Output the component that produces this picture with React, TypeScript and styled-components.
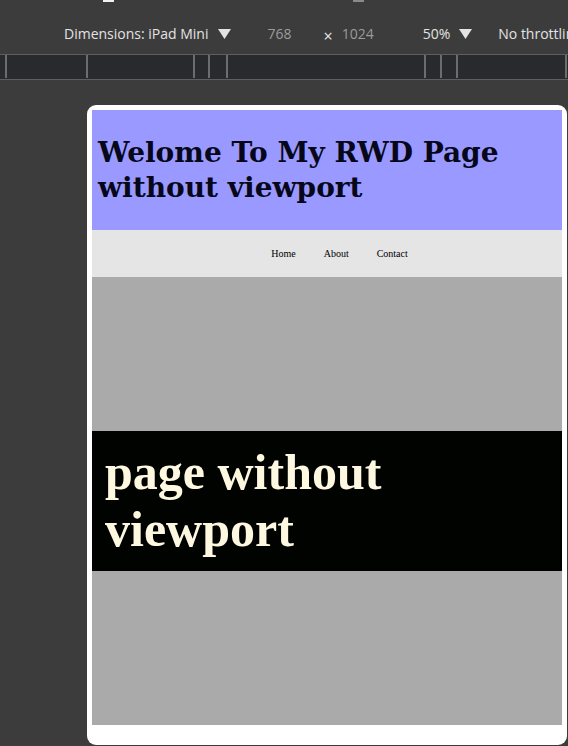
import React from "react";
import styled, { createGlobalStyle } from "styled-components";

const Global = createGlobalStyle`
  html, body {
    margin: 0;
    padding: 0;
    background: #3c3c3c;
    width: 568px;
    height: 746px;
    overflow: hidden;
  }
  * { box-sizing: border-box; }
`;

const Shell = styled.div`
  width: 568px;
  height: 746px;
  display: flex;
  flex-direction: column;
  background: #3c3c3c;
  overflow: hidden;
`;

const Toolbar = styled.div`
  height: 54px;
  display: flex;
  flex-direction: column;
`;

const Marks = styled.div`
  height: 3px;
  display: flex;
`;

const Mark = styled.div<{ $left: number; $width: number; $color: string }>`
  margin-left: ${(p) => p.$left}px;
  width: ${(p) => p.$width}px;
  height: 2px;
  background: ${(p) => p.$color};
`;

const Controls = styled.div`
  flex: 1;
  display: flex;
  align-items: center;
  padding-left: 64px;
  padding-top: 10px;
  font-family: "Open Sans", "Noto Sans", sans-serif;
  font-size: 14px;
  color: #e3e3e3;
  white-space: nowrap;
  overflow: hidden;
`;

const Label = styled.span<{ $muted?: boolean; $gap?: number }>`
  color: ${(p) => (p.$muted ? "#9b9b9b" : "#e3e3e3")};
  margin-left: ${(p) => p.$gap ?? 0}px;
`;

const Caret = styled.svg<{ $gap: number }>`
  margin-left: ${(p) => p.$gap}px;
  width: 13px;
  height: 10px;
  flex: none;
`;

const Times = styled.span<{ $gap: number }>`
  margin-left: ${(p) => p.$gap}px;
  font-size: 16px;
  color: #e8e8e8;
  position: relative;
  top: 2px;
`;

const Ruler = styled.div`
  height: 26px;
  background: #292a2d;
  border-top: 1px solid #5e5e5e;
  border-bottom: 1px solid #5e5e5e;
  display: flex;
  align-items: stretch;
`;

const RulerCell = styled.div<{ $width: number }>`
  width: ${(p) => p.$width}px;
  flex: none;
  border-right: 2px solid #6c6c6c;
  margin-bottom: 1px;
`;

const Stage = styled.div`
  flex: 1;
  padding: 25px 0 0 87px;
`;

const Device = styled.div`
  width: 480px;
  height: 640px;
  background: #ffffff;
  border-radius: 9px;
  padding: 5px 5px 20px 5px;
  display: flex;
  flex-direction: column;
`;

const Header = styled.header`
  height: 120px;
  background: #9999ff;
  display: flex;
  align-items: center;
  padding-left: 6px;
`;

const Title = styled.h1`
  margin: 0;
  font-family: "DejaVu Serif", Georgia, serif;
  font-weight: bold;
  font-size: 28px;
  line-height: 35px;
  color: #07071a;
`;

const Nav = styled.nav`
  height: 47px;
  background: #e5e5e5;
  display: flex;
  align-items: center;
  justify-content: center;
  padding-left: 25px;
  gap: 28px;
`;

const NavLink = styled.a`
  font-family: "Liberation Serif", "Times New Roman", serif;
  font-size: 10px;
  color: #000;
  text-decoration: none;
`;

const Main = styled.main`
  flex: 1;
  background: #aaaaaa;
  display: flex;
  flex-direction: column;
  justify-content: center;
`;

const Band = styled.section`
  height: 140px;
  background: #000300;
  padding: 13px 0 0 13px;
`;

const BandText = styled.h2`
  margin: 0;
  font-family: "Liberation Serif", "Times New Roman", serif;
  font-weight: bold;
  font-size: 50px;
  line-height: 57px;
  color: #fff8e0;
  width: 300px;
`;

const rulerCells = [7, 81, 107, 15, 18, 198, 16, 16, 109];

export default function App() {
  return (
    <>
      <Global />
      <Shell>
        <Toolbar>
          <Marks>
            <Mark $left={103} $width={11} $color="#f2f2f2" />
            <Mark $left={239} $width={11} $color="#8a8a8a" />
          </Marks>
          <Controls>
            <Label>Dimensions: iPad Mini</Label>
            <Caret $gap={10} viewBox="0 0 13 10">
              <path d="M0 0 H13 L6.5 10 Z" fill="#e3e3e3" />
            </Caret>
            <Label $muted $gap={36}>768</Label>
            <Times $gap={32}>×</Times>
            <Label $muted $gap={9}>1024</Label>
            <Label $gap={49}>50%</Label>
            <Caret $gap={9} viewBox="0 0 13 10">
              <path d="M0 0 H13 L6.5 10 Z" fill="#e3e3e3" />
            </Caret>
            <Label $gap={26}>No throttling</Label>
          </Controls>
        </Toolbar>
        <Ruler>
          {rulerCells.map((w, i) => (
            <RulerCell key={i} $width={w} />
          ))}
        </Ruler>
        <Stage>
          <Device>
            <Header>
              <Title>
                Welome To My RWD Page
                <br />
                without viewport
              </Title>
            </Header>
            <Nav>
              <NavLink href="#">Home</NavLink>
              <NavLink href="#">About</NavLink>
              <NavLink href="#">Contact</NavLink>
            </Nav>
            <Main>
              <Band>
                <BandText>page without viewport</BandText>
              </Band>
            </Main>
          </Device>
        </Stage>
      </Shell>
    </>
  );
}
